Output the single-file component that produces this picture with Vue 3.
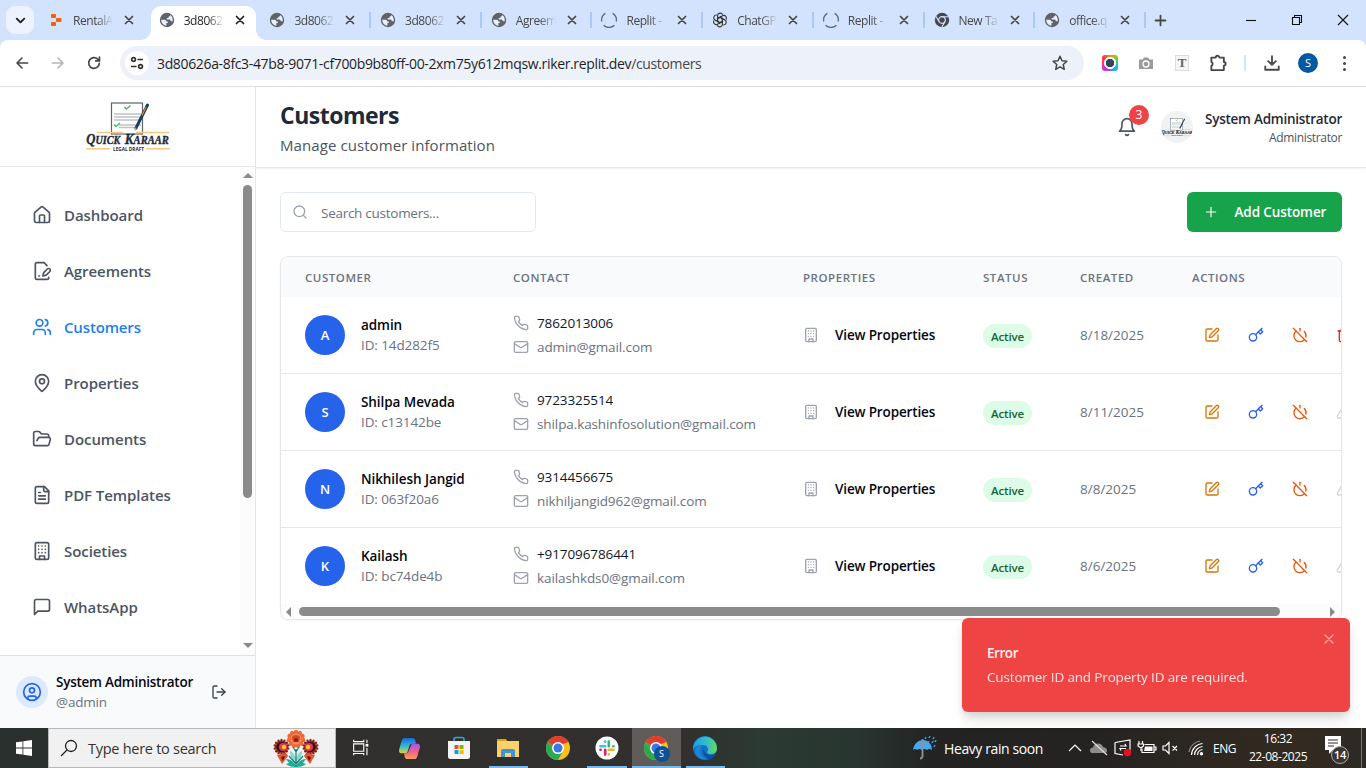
<script setup>
import { h } from 'vue'

const glyphs = {
  home: '<path d="M15 21v-8a1 1 0 0 0-1-1h-4a1 1 0 0 0-1 1v8"/><path d="M3 10a2 2 0 0 1 .709-1.528l7-5.999a2 2 0 0 1 2.582 0l7 5.999A2 2 0 0 1 21 10v9a2 2 0 0 1-2 2H5a2 2 0 0 1-2-2z"/>',
  sign: '<path d="M20 19.5v.5a2 2 0 0 1-2 2H6a2 2 0 0 1-2-2V4a2 2 0 0 1 2-2h8.5L18 5.5"/><path d="M8 18h1"/><path d="M18.42 9.61a2.1 2.1 0 1 1 2.97 2.97L16.95 17 13 18l.99-3.95 4.43-4.44Z"/>',
  users: '<path d="M16 21v-2a4 4 0 0 0-4-4H6a4 4 0 0 0-4 4v2"/><circle cx="9" cy="7" r="4"/><path d="M22 21v-2a4 4 0 0 0-3-3.87"/><path d="M16 3.13a4 4 0 0 1 0 7.75"/>',
  pin: '<path d="M20 10c0 4.993-5.539 10.193-7.399 11.799a1 1 0 0 1-1.202 0C9.539 20.193 4 14.993 4 10a8 8 0 0 1 16 0"/><circle cx="12" cy="10" r="3"/>',
  folder: '<path d="m6 14 1.5-2.9A2 2 0 0 1 9.24 10H20a2 2 0 0 1 1.94 2.5l-1.54 6a2 2 0 0 1-1.95 1.5H4a2 2 0 0 1-2-2V5a2 2 0 0 1 2-2h3.9a2 2 0 0 1 1.69.9l.81 1.2a2 2 0 0 0 1.67.9H18a2 2 0 0 1 2 2v2"/>',
  file: '<path d="M15 2H6a2 2 0 0 0-2 2v16a2 2 0 0 0 2 2h12a2 2 0 0 0 2-2V7Z"/><path d="M14 2v4a2 2 0 0 0 2 2h4"/><path d="M10 9H8"/><path d="M16 13H8"/><path d="M16 17H8"/>',
  building: '<rect width="16" height="20" x="4" y="2" rx="2"/><path d="M9 22v-4h6v4"/><path d="M8 6h.01M16 6h.01M12 6h.01M12 10h.01M12 14h.01M16 10h.01M16 14h.01M8 10h.01M8 14h.01"/>',
  message: '<path d="M21 15a2 2 0 0 1-2 2H7l-4 4V5a2 2 0 0 1 2-2h14a2 2 0 0 1 2 2z"/>',
  user: '<circle cx="12" cy="12" r="10"/><circle cx="12" cy="10" r="3"/><path d="M7 20.662V19a2 2 0 0 1 2-2h6a2 2 0 0 1 2 2v1.662"/>',
  logout: '<path d="M9 21H5a2 2 0 0 1-2-2V5a2 2 0 0 1 2-2h4"/><path d="m16 17 5-5-5-5"/><path d="M21 12H9"/>',
  bell: '<path d="M6 8a6 6 0 0 1 12 0c0 7 3 9 3 9H3s3-2 3-9"/><path d="M10.3 21a1.94 1.94 0 0 0 3.4 0"/>',
  search: '<circle cx="11" cy="11" r="8"/><path d="m21 21-4.3-4.3"/>',
  plus: '<path d="M5 12h14M12 5v14"/>',
  close: '<path d="M18 6 6 18M6 6l12 12"/>',
  phone: '<path d="M22 16.92v3a2 2 0 0 1-2.18 2 19.79 19.79 0 0 1-8.63-3.07 19.5 19.5 0 0 1-6-6 19.79 19.79 0 0 1-3.07-8.67A2 2 0 0 1 4.11 2h3a2 2 0 0 1 2 1.72 12.84 12.84 0 0 0 .7 2.81 2 2 0 0 1-.45 2.11L8.09 9.91a16 16 0 0 0 6 6l1.27-1.27a2 2 0 0 1 2.11-.45 12.84 12.84 0 0 0 2.81.7A2 2 0 0 1 22 16.92z"/>',
  mail: '<rect width="20" height="16" x="2" y="4" rx="2"/><path d="m22 7-8.97 5.7a1.94 1.94 0 0 1-2.06 0L2 7"/>',
  edit: '<path d="M12 3H5a2 2 0 0 0-2 2v14a2 2 0 0 0 2 2h14a2 2 0 0 0 2-2v-7"/><path d="M18.375 2.625a1 1 0 0 1 3 3l-9.013 9.014a2 2 0 0 1-.853.505l-2.873.84a.5.5 0 0 1-.62-.62l.84-2.873a2 2 0 0 1 .506-.852z"/>',
  key: '<circle cx="7.5" cy="15.5" r="5.5"/><path d="m21 2-9.6 9.6"/><path d="m15.5 7.5 3 3L22 7l-3-3"/>',
  power: '<path d="M18.36 6.64A9 9 0 0 1 20.77 15"/><path d="M6.16 6.16a9 9 0 1 0 12.68 12.68"/><path d="M12 2v4"/><path d="m2 2 20 20"/>',
  trash: '<path d="M3 6h18"/><path d="M19 6v14a2 2 0 0 1-2 2H7a2 2 0 0 1-2-2V6"/><path d="M8 6V4a2 2 0 0 1 2-2h4a2 2 0 0 1 2 2v2"/><path d="M10 11v6M14 11v6"/>',
  alert: '<path d="m21.73 18-8-14a2 2 0 0 0-3.48 0l-8 14A2 2 0 0 0 4 21h16a2 2 0 0 0 1.73-3"/><path d="M12 9v4M12 17h.01"/>',
  back: '<path d="M20.500 12H4.500M12 4.500 4.500 12l7.500 7.500"/>',
  forward: '<path d="M3.500 12h16M12 4.500l7.500 7.500-7.500 7.500"/>',
  reload: '<path d="M20 12.500a8 8 0 1 1-2.400-6.200L20 8.600"/><path d="M20.200 3.200v5.700h-5.700"/>',
  star: '<path d="m12 3 2.700 6 6.500.7-4.900 4.300 1.400 6.500-5.700-3.400-5.700 3.400 1.400-6.500-4.900-4.300 6.500-.7z"/>',
  puzzle: '<path d="M4 5.500h5.300a2.200 2.200 0 0 1 4.400 0h5.300v5.300a2.200 2.200 0 0 1 0 4.400v5.300H4v-5.100a2.600 2.600 0 0 0 0-4.800z"/>',
  download: '<path d="M12 3v11M7 9.500l5 5 5-5M3 16.500v4.500h18v-4.500"/>',
  chevron: '<path d="m6 9 6 6 6-6"/>',
}

const Icon = (p) =>
  h('svg', {
    viewBox: '0 0 24 24', width: p.size, height: p.size, fill: 'none', stroke: 'currentColor',
    'stroke-width': p.stroke || 2, 'stroke-linecap': 'round', 'stroke-linejoin': 'round',
    innerHTML: glyphs[p.name],
  })
Icon.props = ['name', 'size', 'stroke']

const globe = '<circle cx="8" cy="8" r="7.200" fill="#5f6368"/><path fill="#e6effe" d="M2.200 7.800h3.600q1.500.2 1.600 1.600h1.400v1.700H7.400v2.600C4.300 13.500 2.200 11 2.200 7.800zM8.300 2.300c1.200 0 2 .3 2.900.8-.1 1-.7 1.600-1.800 1.700v1.300H7.700v1.500h2.900q1.100.3 1.200 1.700h1.900C14.300 5.500 12 2.300 8.300 2.300z"/>'
const spinner = '<g fill="none" stroke="#4a7186" stroke-width="1.300"><path d="M4.500 1.400A7.500 7.500 0 0 0 .8 9.500M11.500 1.400a7.500 7.500 0 0 1 3.700 8.100M2.600 13.200a7.500 7.500 0 0 0 10.800 0"/></g>'
const knot = '<g fill="none" stroke="#333" stroke-width="1.100">' +
  [0, 60, 120, 180, 240, 300].map((a) => `<path transform="rotate(${a} 8 8)" d="M5.600 8V3.700a2.600 2.600 0 0 1 5-1M5.600 6.600 8 5.200l3.800 2.200"/>`).join('') + '</g>'
const favicons = {
  replit: '<g fill="#f26207"><rect x="3" y="2" width="5" height="4" rx=".8"/><rect x="8" y="6" width="5.500" height="4" rx=".8"/><rect x="3" y="10" width="5" height="4" rx=".8"/></g>',
  globe, spinner, knot,
  chrome: '<circle cx="8" cy="8" r="7.200" fill="#45484c"/><circle cx="8" cy="8" r="3.300" fill="none" stroke="#d3e3fd" stroke-width="1.200"/><path d="M8 4.700h6.500M5.100 9.700 1.900 4.200M10.900 9.700 7.700 15.200" stroke="#d3e3fd" stroke-width="1.100"/>',
}
const tabs = [
  { icon: 'replit', title: 'RentalA', sep: false },
  { icon: 'globe', title: '3d8062', active: true, sep: false },
  { icon: 'globe', title: '3d8062', sep: true },
  { icon: 'globe', title: '3d8062', sep: true },
  { icon: 'globe', title: 'Agreem', sep: true },
  { icon: 'spinner', title: 'Replit -', sep: true },
  { icon: 'knot', title: 'ChatGP', sep: true },
  { icon: 'spinner', title: 'Replit -', sep: true },
  { icon: 'chrome', title: 'New Ta', sep: true },
  { icon: 'globe', title: 'office.q', sep: true },
]

const nav = [
  { icon: 'home', label: 'Dashboard' },
  { icon: 'sign', label: 'Agreements' },
  { icon: 'users', label: 'Customers', active: true },
  { icon: 'pin', label: 'Properties' },
  { icon: 'folder', label: 'Documents' },
  { icon: 'file', label: 'PDF Templates' },
  { icon: 'building', label: 'Societies' },
  { icon: 'message', label: 'WhatsApp' },
]

const columns = ['Customer', 'Contact', 'Properties', 'Status', 'Created', 'Actions']
const customers = [
  { name: 'admin', id: '14d282f5', phone: '7862013006', email: 'admin@gmail.com', created: '8/18/2025', last: 'trash' },
  { name: 'Shilpa Mevada', id: 'c13142be', phone: '9723325514', email: 'shilpa.kashinfosolution@gmail.com', created: '8/11/2025', last: 'alert' },
  { name: 'Nikhilesh Jangid', id: '063f20a6', phone: '9314456675', email: 'nikhiljangid962@gmail.com', created: '8/8/2025', last: 'alert' },
  { name: 'Kailash', id: 'bc74de4b', phone: '+917096786441', email: 'kailashkds0@gmail.com', created: '8/6/2025', last: 'alert' },
]

const logoArt =
  '<rect x="25.500" y="1" width="31" height="31" fill="#fff" stroke="#5b6470" stroke-width="1.200"/>' +
  '<path d="M28 12h27M28 15h27M28 18h27M33 23h22M33 25.500h18" stroke="#bfc3c8" stroke-width="1.500"/>' +
  '<path d="m38.500 5 2 2 4-3.500M28 22.500l2 2 4-3.500" fill="none" stroke="#4dbb5f" stroke-width="1.500"/>' +
  '<path d="m61.500 3-11.500 23" stroke="#1d3a5c" stroke-width="3" stroke-linecap="round"/><path d="m60 5-4 8.500M50 25.500 48.800 28.500" stroke="#d99b3c" stroke-width="1.100"/>' +
  '<path d="M11 30.500h26M50 30.500h33M0 46.800h24M60 46.800h24" stroke="#f9c780" stroke-width="1.400"/>' +
  '<g font-family="Liberation Serif, serif" font-weight="bold" font-style="italic" fill="#1f2a37" stroke="#1f2a37" stroke-width=".4"><text x=".3" y="42" font-size="15" textLength="34" lengthAdjust="spacingAndGlyphs">Q<tspan font-size="12">UICK</tspan></text><text x="38.800" y="42" font-size="15" textLength="44" lengthAdjust="spacingAndGlyphs">K<tspan font-size="12">ARAAR</tspan></text></g>' +
  '<text x="27" y="48.600" font-size="5" font-family="Open Sans, sans-serif" font-weight="bold" fill="#1f2a37" textLength="31" lengthAdjust="spacingAndGlyphs">LEGAL DRAFT</text>'

const chromeBall =
  '<circle cx="12" cy="12" r="12" fill="#fbc116"/><path d="M1.600 6A12 12 0 0 1 22.400 6H12a6 6 0 0 0-5.200 3z" fill="#e33b2e"/><path d="M1.600 6A12 12 0 0 0 12 24l5.200-9A6 6 0 0 1 6.800 15z" fill="#2da94f"/><path d="M1.600 6 6.800 15 12 12z" fill="#2da94f"/><path d="M1.600 6h20.800L12 10z" fill="#e33b2e"/><circle cx="12" cy="12" r="6" fill="#fff"/><circle cx="12" cy="12" r="4.500" fill="#3b78e7"/>'
const apps = [
  { name: 'task', art: '<g fill="none" stroke="#fff" stroke-width="1.200"><path d="M4 7.500h11v8H4zM4 3v2h11V3M4 20v-2h11v2M18.500 3v3.500M18.500 12v8"/></g><path d="M17 7.500h3v3h-3z" fill="#fff"/>' },
  { name: 'copilot', art: '<defs><linearGradient id="cp1" x1="0" y1="0" x2="0" y2="1"><stop stop-color="#1b67d8"/><stop offset=".5" stop-color="#29b6d9"/><stop offset="1" stop-color="#d8d43a"/></linearGradient><linearGradient id="cp2" x1="0" y1="0" x2="0" y2="1"><stop stop-color="#a259e6"/><stop offset=".5" stop-color="#ef5c96"/><stop offset="1" stop-color="#f8a14f"/></linearGradient></defs><path d="M7 1h8c2 0 2.500 1 3 2.500l.7 3.500H15c-2 0-2.700 1-3.200 2.700L10 15c-.5 1.500-1.200 2-3 2H4c-3 0-3.300-2-2.700-4.500L4 3.500C4.500 2 5.300 1 7 1z" fill="url(#cp1)"/><path d="M17 23H10c-2 0-2.500-1-3-2.500L6.300 17H8c2 0 2.700-1 3.200-2.700L13.500 9c.5-1.500 1.200-2 3-2H20c3 0 3.300 2 2.700 4.500L20 20.500c-.5 1.500-1.300 2.500-3 2.500z" fill="url(#cp2)"/>' },
  { name: 'store', art: '<path d="M7 5V3.500Q7 1.500 9 1.500h6q2 0 2 2V5" fill="none" stroke="#29a9df" stroke-width="1.600"/><path d="M1 5h22v15.500q0 2.500-2.500 2.500h-17Q1 23 1 20.500z" fill="#f4f4f4"/><path d="M7.500 9h4v4h-4z" fill="#f25022"/><path d="M12.500 9h4v4h-4z" fill="#7fba00"/><path d="M7.500 14h4v4h-4z" fill="#00a4ef"/><path d="M12.500 14h4v4h-4z" fill="#ffb900"/>' },
  { name: 'files', open: true, art: '<path d="M1 3h9l2 3h-11z" fill="#e0a10d"/><path d="M1 5h22v16H1z" fill="#fcd267"/><path d="M5 21v-6q0-2 2-2h10q2 0 2 2v6h-4v-4H9v4z" fill="#3e93d9"/>' },
  { name: 'chrome', art: chromeBall },
  { name: 'slack', open: true, art: '<circle cx="12" cy="12" r="11.500" fill="#fff"/><g stroke-width="2.600" stroke-linecap="round"><path d="M10.200 5.500v.2M5.500 10.200h4.700" stroke="#36c5f0"/><path d="M13.800 5.500v4.700M18.500 10.200h-.2" stroke="#2eb67d"/><path d="M13.800 13.800h4.700M13.800 18.500v-.2" stroke="#ecb22e"/><path d="M10.200 13.800v4.700M5.500 13.800h.2" stroke="#e01e5a"/></g>' },
  { name: 'chromeS', open: true, active: true, art: chromeBall },
  { name: 'edge', open: true, art: '<defs><linearGradient id="ed1" x1="0" x2="1"><stop stop-color="#1b9de2"/><stop offset=".6" stop-color="#35c1c9"/><stop offset="1" stop-color="#6fd84a"/></linearGradient></defs><circle cx="12" cy="12" r="12" fill="#1570c4"/><path d="M.2 10.500A12 12 0 0 1 24 12c0 4-3 6-6 6-3.500 0-4.500-1.800-3.500-3 1.500-2 0-6-4.500-6C5 9 1.500 10 .2 14z" fill="url(#ed1)"/><path d="M10 9.500c-4 2-4 10 3.500 13.500-3 1-9-.5-11-6S5.500 9 10 9.500z" fill="#1a86d8"/><path d="M11.500 11.500c-1.500 2.500 0 7.500 6 7.500 2 0 3.500-.5 5-1.500-1.500 3-3 4.500-5 5.500-6 0-9.500-7-6-11.500z" fill="#0d4f9c"/>' },
]

const petals = (n, r, w, len, fill) =>
  Array.from({ length: n }, (_, i) => `<ellipse cx="0" cy="${-r}" rx="${w}" ry="${len}" fill="${fill}" transform="rotate(${(i * 360) / n})"/>`).join('')
const flowers =
  '<g transform="translate(23 10)">' + petals(11, 6.5, 2.2, 2.8, '#ee6a35') + '<circle r="5.500" fill="#f58a5b"/><path d="M-4-1a4 3 0 0 1 8 0l-1 4h-6z" fill="#d9452a"/><circle r="2" cy="1" fill="#7a2014"/></g>' +
  '<g transform="translate(8.500 18)">' + petals(14, 5.8, 1.3, 2.4, '#8c1d18') + '<circle r="5" fill="#2d1715"/><circle cx="1.500" r="4" fill="#e8344e"/><circle cx="2.500" r="2.300" fill="#f8c83c"/></g>' +
  '<g transform="translate(37.500 18)">' + petals(14, 5.8, 1.3, 2.4, '#8c1d18') + '<circle r="5" fill="#2d1715"/><circle cx="-1.500" r="4" fill="#e8344e"/><circle cx="-2.500" r="2.300" fill="#f8c83c"/></g>' +
  '<path d="m4 26 9-2 2 3-6 8zM42 26l-9-2-2 3 6 8z" fill="#e2552c"/><path d="m8 28 4-1-2 5zM38 28l-4-1 2 5z" fill="#531a17"/>' +
  '<path d="M23 38q-7 0-10-3l3-1-3-4q5 0 8 4l2 2 2-2q3-4 8-4l-3 4 3 1q-3 3-10 3z" fill="#25a99a"/><path d="M23 36c-5-6-6-10-6-14 3 1 5 4 6 7 1-3 3-6 6-7 0 4-1 8-6 14z" fill="#8fd6d2"/><path d="m20 18 3 5 3-5M23 20v18M16 27l7 8 7-8" fill="none" stroke="#178477" stroke-width="1.200"/>'
</script>

<template>
  <div class="screen">
    <div class="tabstrip">
      <div class="tabsearch"><Icon name="chevron" size="15" stroke="3" /></div>
      <div v-for="(t, i) in tabs" :key="i" class="tab" :class="{ active: t.active, sep: t.sep }">
        <svg class="favicon" viewBox="0 0 16 16" v-html="favicons[t.icon]"></svg>
        <span class="title">{{ t.title }}</span>
        <Icon name="close" size="14" stroke="3" />
      </div>
      <Icon class="newtab" name="plus" size="17" stroke="2.500" />
      <div class="winctl">
        <svg viewBox="0 0 12 12"><path d="M1 6.500h10" /></svg>
        <svg viewBox="0 0 12 12"><path d="M1.500 3.500h7v7h-7zM3.500 3.500v-2h7v7h-2" /></svg>
        <svg viewBox="0 0 12 12"><path d="m1 1 10 10M11 1 1 11" /></svg>
      </div>
    </div>
    <div class="toolbar-back">
      <div class="toolbar">
        <div class="tool"><Icon name="back" size="16" stroke="2.400" /></div>
        <div class="tool dim"><Icon name="forward" size="16" stroke="2.400" /></div>
        <div class="tool"><Icon name="reload" size="16" stroke="2.600" /></div>
        <div class="omnibox">
          <span class="siteinfo">
            <svg viewBox="0 0 16 16"><g fill="none" stroke="#333" stroke-width="1.700"><circle cx="4.500" cy="4.500" r="1.900" /><path d="M8.500 4.500H14M2 11.500h5.500" /><circle cx="11.500" cy="11.500" r="1.900" /></g></svg>
          </span>
          <span class="url">3d80626a-8fc3-47b8-9071-cf700b9b80ff-00-2xm75y612mqsw.riker.replit.dev<i>/customers</i></span>
          <Icon class="star" name="star" size="18" stroke="2" />
        </div>
        <div class="tool">
          <span class="lens"></span>
        </div>
        <div class="tool">
          <svg width="16" height="16" viewBox="0 0 16 16"><path d="M1 4.500h3.500L6 2.500h4l1.500 2H15V14H1z" fill="#9b9b9b" /><circle cx="8" cy="9" r="3" fill="#9b9b9b" stroke="#fff" stroke-width="1.300" /></svg>
        </div>
        <div class="tool"><span class="tee">T</span></div>
        <div class="tool"><Icon name="puzzle" size="20" stroke="2.200" /></div>
        <div class="divider"></div>
        <div class="tool"><Icon name="download" size="18" stroke="2.400" /></div>
        <div class="tool"><span class="profile">S</span></div>
        <div class="tool"><span class="dots"><b></b><b></b><b></b></span></div>
      </div>
    </div>

    <div class="app">
      <aside class="sidebar">
        <div class="brand"><svg class="logo" viewBox="0 0 84 50" v-html="logoArt"></svg></div>
        <div class="navwrap">
          <nav>
            <a v-for="n in nav" :key="n.label" :class="{ active: n.active }"><Icon :name="n.icon" size="20" /><span>{{ n.label }}</span></a>
          </nav>
          <div class="vscroll"><i class="up"></i><div class="thumb"></div><i class="down"></i></div>
        </div>
        <div class="account">
          <span class="face"><Icon name="user" size="20" /></span>
          <div class="who"><strong>System Administrator</strong><span>@admin</span></div>
          <Icon class="exit" name="logout" size="16" />
        </div>
      </aside>

      <main>
        <header>
          <div class="heading"><h1>Customers</h1><p>Manage customer information</p></div>
          <div class="notify"><Icon name="bell" size="20" /><span class="count">3</span></div>
          <div class="portrait"><svg viewBox="0 0 84 50" v-html="logoArt"></svg></div>
          <div class="me"><strong>System Administrator</strong><span>Administrator</span></div>
        </header>
        <section class="content">
          <div class="actionsbar">
            <div class="searchbox"><Icon name="search" size="16" /><span>Search customers...</span></div>
            <button class="add"><Icon name="plus" size="16" stroke="1.700" /><span>Add Customer</span></button>
          </div>
          <div class="card">
            <div class="row head"><span v-for="c in columns" :key="c">{{ c }}</span></div>
            <div v-for="c in customers" :key="c.id" class="row">
              <div class="person">
                <span class="avatar">{{ c.name[0].toUpperCase() }}</span>
                <div><strong>{{ c.name }}</strong><span>ID: {{ c.id }}</span></div>
              </div>
              <div class="contact">
                <div><Icon name="phone" size="16" /><span class="tel">{{ c.phone }}</span></div>
                <div><Icon name="mail" size="16" /><span class="mail">{{ c.email }}</span></div>
              </div>
              <div class="props"><Icon name="building" size="16" /><span>View Properties</span></div>
              <div class="status"><span>Active</span></div>
              <div class="created">{{ c.created }}</div>
              <div class="ops">
                <Icon class="amber" name="edit" size="16" />
                <Icon class="blue" name="key" size="16" />
                <Icon class="orange" name="power" size="16" />
                <Icon :class="c.last" :name="c.last" size="16" />
              </div>
            </div>
            <div class="hscroll"><i class="left"></i><div class="thumb"></div><i class="right"></i></div>
          </div>
        </section>
      </main>
    </div>

    <div class="toast">
      <strong>Error</strong>
      <p>Customer ID and Property ID are required.</p>
      <Icon class="dismiss" name="close" size="16" />
    </div>

    <footer class="taskbar">
      <div class="start"><svg viewBox="0 0 16 16"><path d="M0 2.300 6.500 1.400v6.200H0zM7.300 1.300 16 0v7.600H7.300zM0 8.400h6.500v6.200L0 13.700zM7.300 8.400H16V16l-8.700-1.300z" fill="#fff" /></svg></div>
      <div class="find">
        <svg class="mag" viewBox="0 0 18 18"><circle cx="11" cy="7" r="5.500" /><path d="m7 11-6 6" /></svg>
        <span>Type here to search</span>
        <svg class="flowers" viewBox="0 0 46 38" v-html="flowers"></svg>
      </div>
      <div class="apps">
        <div v-for="a in apps" :key="a.name" class="app-icon" :class="[a.name, { open: a.open, current: a.active }]">
          <svg viewBox="0 0 24 24" v-html="a.art"></svg>
          <span v-if="a.active" class="mini">S</span>
        </div>
      </div>
      <div class="tray">
        <svg class="umbrella" viewBox="0 0 28 26"><path d="M2 15C3 8 8 5 12 5s9 3 9 10q-3-2-5 0-3-2-5 0-3-2-5 0-2-2-4 0z" fill="#4aa6ea" /><path d="M11.500 4v17q0 2.500-2.500 2.500" fill="none" stroke="#8d9297" stroke-width="1.800" /><path d="m15 2-1 2M19 1l-1 2M23 2l-1 2M18 6l-1 2M22 6l-1 2M25 5l-1 2M24 10l-1 2" stroke="#3f9be8" stroke-width="1.500" /></svg>
        <span class="weather">Heavy rain soon</span>
        <svg class="w26" viewBox="0 0 26 20"><path d="m7 13 6-6 6 6" /></svg>
        <svg class="w22" viewBox="0 0 22 20"><path d="M4 15q-2 0-2-3 0-2 3-2.500 1-4 5-4 4 0 5 3.500 4 .5 4 3.500 0 2.500-3 2.500z" fill="#8d8d8d" stroke="none" /><path d="M4 3l15 14" stroke="#ddd" /></svg>
        <svg class="w26" viewBox="0 0 26 20"><path d="M5 4.500 20 2v10M5 4.500V15.500l8 1.500M10 8h6l-1-2M16 10.500h-6l1 2" /><circle cx="17.500" cy="14.500" r="3.800" fill="#e81123" stroke="none" /></svg>
        <svg class="w22" viewBox="0 0 22 20"><path d="M8.500 6.500H18v8H6v-4M18.500 9h1.500v3h-1.500" /><path d="M9 8.500h7.500V13H8z" fill="#fff" stroke="none" /><path d="M3 3v3M6.500 3v3M2 6h5.500v2L5 10 2 8zM5 10v3" /></svg>
        <svg class="w26" viewBox="0 0 26 20"><path d="M5 8h2.500L11 4.500v11L7.500 12H5zM14.500 8l4.500 4.500M19 8l-4.500 4.500" /></svg>
        <svg class="w26 wifi" viewBox="0 0 26 20"><path d="M7.500 17A12 12 0 0 1 18.500 5.500M10.500 17a9 9 0 0 1 8-8.500M13.500 17a6 6 0 0 1 5-5.500" /><path d="M5 14A14 14 0 0 1 16 3" stroke="#888" /><circle cx="17.500" cy="15.800" r="1.700" fill="#fff" stroke="none" /></svg>
        <span class="lang">ENG</span>
        <div class="clock"><span class="time">16:32</span><span class="date">22-08-2025</span></div>
        <div class="alerts"><svg viewBox="0 0 36 32"><path d="M8 4h16v14H16l-4 4v-4H8z" fill="#fff" /><path d="M11 8h10M11 11h10M11 14h6" stroke="#2a2826" /></svg><span>14</span></div>
        <div class="edge-line"></div>
      </div>
    </footer>
  </div>
</template>

<style>
html, body { margin: 0; overflow: hidden; }
</style>

<style scoped>
* { box-sizing: border-box; }
.screen { position: relative; width: 1366px; height: 768px; overflow: hidden; display: flex; flex-direction: column; background: #fff; font-family: "Open Sans", "Noto Sans", sans-serif; color: #030712; }
svg { display: block; flex: none; }
strong { font-weight: 600; }
span, strong, p, h1 { white-space: nowrap; }

.tabstrip { height: 40px; background: #d3e3fd; display: flex; flex: none; }
.tabsearch { width: 28px; height: 28px; margin: 6px 4px 0 6px; border-radius: 9px; background: #edf3fe; display: flex; align-items: center; justify-content: center; color: #1f1f1f; flex: none; }
.tab { position: relative; width: 110.7px; flex: none; padding-left: 10px; display: flex; align-items: center; color: #474747; height: 40px; }
.tab > * { position: relative; }
.favicon { width: 16px; height: 16px; }
.title { width: 42px; margin: 0 7px 0 9px; font-size: 12px; letter-spacing: -0.45px; line-height: 20px; padding-top: 1px; -webkit-mask-image: linear-gradient(90deg, #000 55%, transparent 96%); mask-image: linear-gradient(90deg, #000 55%, transparent 96%); }
.tab.sep::after { content: ""; position: absolute; right: -1px; top: 12px; width: 2px; height: 16px; background: #a8c7fa; }
.tab.active { color: #1f1f1f; }
.tab.active::before { content: ""; position: absolute; left: 2px; right: 3px; top: 6px; bottom: 0; border-radius: 10px 10px 0 0; background: #fff; }
.tab.active::after { content: ""; position: absolute; left: -8px; right: -7px; bottom: 0; height: 10px; background: radial-gradient(circle at 0 0, transparent 9.500px, #fff 10px) 0 0 / 10px 10px no-repeat, radial-gradient(circle at 100% 0, transparent 9.500px, #fff 10px) 100% 0 / 10px 10px no-repeat; }
.newtab { align-self: center; margin-left: 7px; color: #474747; }
.winctl { margin-left: auto; display: flex; align-items: center; gap: 34px; padding-right: 17px; }
.winctl svg { width: 12px; height: 12px; fill: none; stroke: #111; stroke-width: 1.1; }

.toolbar-back { height: 47px; background: #d3e3fd; flex: none; }
.toolbar { height: 47px; background: #fff; border-radius: 8px 8px 0 0; border-bottom: 1px solid #dedfe1; display: flex; align-items: center; padding: 0 4px; }
.tool { width: 36px; height: 36px; display: flex; align-items: center; justify-content: center; color: #474747; flex: none; }
.dim { color: #b4b4b4; }
.omnibox { width: 964px; height: 34px; margin: 0 8px; border-radius: 17px; background: #edf1fa; display: flex; align-items: center; flex: none; }
.siteinfo { width: 24px; height: 24px; margin: 0 8px 0 5px; border-radius: 50%; background: #fff; display: flex; align-items: center; justify-content: center; }
.siteinfo svg { width: 16px; height: 16px; }
.url { font-size: 14px; letter-spacing: -0.35px; color: #1f1f1f; }
.url i { font-style: normal; color: #474747; }
.star { margin: 0 15px 0 auto; color: #474747; }
.lens { width: 16px; height: 16px; border-radius: 3px; background: radial-gradient(circle, #34445a 4px, #fff 4.500px 5.800px, transparent 6.300px), conic-gradient(#ff8a1e, #7ed321, #17c6d9, #2aa4ff, #b935f0, #ff2f8e, #ff3b3b, #ff8a1e); }
.tee { width: 14px; height: 16px; border: 1px solid #ddd; background: #f5f5f5; font: bold 13px/14px "Liberation Serif", serif; color: #666; text-align: center; }
.divider { width: 2px; height: 16px; margin: 0 8px; background: #d3e3fd; flex: none; }
.profile { width: 20px; height: 20px; border-radius: 50%; background: #0159a0; color: #fff; font-size: 11px; line-height: 20px; text-align: center; }
.dots { display: flex; flex-direction: column; gap: 3px; }
.dots b { width: 3px; height: 3px; border-radius: 50%; background: #474747; }

.app { display: flex; height: 641px; flex: none; }
.sidebar { width: 256px; border-right: 1px solid #e5e7eb; display: flex; flex-direction: column; flex: none; }
.brand { height: 80px; border-bottom: 1px solid #e5e7eb; display: flex; justify-content: center; padding-top: 15px; flex: none; }
.logo { width: 84px; height: 50px; }
.navwrap { display: flex; flex: 1; }
nav { flex: 1; display: flex; flex-direction: column; gap: 8px; padding: 24px 16px 0; }
nav a { height: 48px; padding: 0 16px; display: flex; align-items: center; gap: 12px; font-size: 15px; font-weight: 600; color: #4b5563; letter-spacing: -0.07px; }
nav a.active { color: #1d80ea; letter-spacing: -0.15px; }
.vscroll { width: 15px; padding: 6px 0 7px; background: #fcfcfc; display: flex; flex-direction: column; align-items: center; }
.vscroll .thumb { width: 9px; height: 313px; margin: 7px 0 auto; border-radius: 5px; background: #8b8b8b; }
.up, .down { border: 5px solid transparent; width: 0; }
.up { border-top: 0; border-bottom: 5px solid #8b8b8b; }
.down { border-bottom: 0; border-top: 5px solid #8b8b8b; }
.account { height: 73px; border-top: 1px solid #dbe2ec; background: #f9fafb; padding: 0 16px; display: flex; align-items: center; flex: none; }
.face { width: 32px; height: 32px; border-radius: 50%; background: #dbeafe; color: #2563eb; display: flex; align-items: center; justify-content: center; }
.who { margin-left: 8px; width: 155px; display: flex; flex-direction: column; font-size: 13.500px; line-height: 20px; letter-spacing: -0.2px; }
.who strong { letter-spacing: -0.25px; }
.who span { color: #6b7280; }
.exit { color: #374151; }

main { flex: 1; display: flex; flex-direction: column; min-width: 0; }
header { height: 81px; border-bottom: 1px solid #e5e7eb; box-shadow: 0 1px 2px rgba(0,0,0,.06); padding: 0 24px; display: flex; align-items: center; flex: none; }
h1 { margin: 0; font-size: 23px; line-height: 32px; font-weight: 700; color: #1f2937; letter-spacing: -0.5px; }
.heading { align-self: flex-start; padding-top: 12px; }
.heading p { margin: 2px 0 0; font-size: 15px; line-height: 24px; color: #4b5563; letter-spacing: .08px; }
.notify { position: relative; margin-left: auto; margin-right: 24px; color: #4b5563; }
.count { position: absolute; left: 12px; top: -12px; width: 20px; height: 20px; border-radius: 50%; background: #ef4444; color: #fff; font-size: 12px; line-height: 20px; text-align: center; }
.portrait { width: 32px; height: 32px; border-radius: 50%; background: #f1f2f4; overflow: hidden; display: flex; align-items: center; }
.portrait svg { width: 32px; height: 19px; }
.me { width: 137px; margin-left: 12px; padding-top: 2px; display: flex; flex-direction: column; align-items: flex-end; }
.me strong { font-size: 13.500px; line-height: 20px; color: #1f2937; letter-spacing: -0.25px; }
.me span { font-size: 12px; line-height: 18px; color: #4b5563; letter-spacing: -0.35px; }

.content { padding: 24px; }
.actionsbar { height: 40px; display: flex; justify-content: space-between; }
.searchbox { width: 256px; border: 1px solid #e2e8f0; border-radius: 6px; display: flex; align-items: center; padding-left: 11px; gap: 13px; color: #9ca3af; }
.searchbox span { color: #6b7280; font-size: 13.500px; letter-spacing: -0.27px; padding-top: 2px; }
.add { width: 155px; border: 0; border-radius: 6px; background: #16a34a; color: #fff; display: flex; align-items: center; padding: 0 16px; gap: 15.500px; font: 600 13.500px "Open Sans", sans-serif; letter-spacing: -0.1px; }
.card { margin-top: 24px; width: 1062px; height: 364px; border: 1px solid #e5e7eb; border-radius: 8px; overflow: hidden; box-shadow: 0 1px 2px rgba(0,0,0,.05); }
.row { display: grid; grid-template-columns: 208px 290px 180px 97px 112px 190px; padding-left: 24px; height: 77px; align-items: center; border-bottom: 1px solid #e5e7eb; width: 1200px; }
.row:nth-last-child(2) { border-bottom: 0; height: 76px; }
.row.head { height: 40px; background: #f9fafb; border: 0; color: #6b7280; text-transform: uppercase; font-size: 11.500px; font-weight: 600; letter-spacing: .55px; }
.person { display: flex; gap: 16px; align-items: center; }
.avatar { width: 40px; height: 40px; border-radius: 50%; background: #2563eb; color: #fff; font-size: 13px; font-weight: 600; line-height: 40px; text-align: center; }
.person div { display: flex; flex-direction: column; font-size: 13.500px; line-height: 20px; letter-spacing: -0.1px; }
.person strong { letter-spacing: -0.07px; }
.person div span { color: #6b7280; }
.contact { display: flex; flex-direction: column; gap: 4px; font-size: 13.500px; line-height: 20px; }
.contact div { display: flex; gap: 8px; align-items: center; color: #9ca3af; }
.contact .tel { color: #111827; letter-spacing: -0.1px; }
.contact .mail { color: #6b7280; letter-spacing: -0.1px; }
.props { display: flex; align-items: center; gap: 16px; font-size: 13.500px; font-weight: 600; letter-spacing: -0.15px; }
.props svg { color: #9ca3af; }
.status { padding-top: 2px; }
.status span { display: block; width: 49px; height: 24px; border-radius: 12px; background: #dcfce7; color: #166534; font-size: 11.500px; font-weight: 600; line-height: 25px; text-align: center; letter-spacing: -0.1px; }
.created { color: #6b7280; font-size: 13.500px; }
.ops { display: flex; gap: 28px; padding-left: 12px; }
.amber { color: #d97706; }
.blue { color: #2563eb; }
.orange { color: #ea580c; }
.trash { color: #dc2626; }
.alert { color: #d1d5db; }
.hscroll { height: 15px; background: #fcfcfc; display: flex; align-items: center; padding: 0 6px 0 5px; }
.hscroll .thumb { width: 981px; height: 9px; margin: 0 auto 0 8px; border-radius: 5px; background: #8b8b8b; }
.left, .right { border: 5px solid transparent; }
.left { border-left: 0; border-right: 5px solid #8b8b8b; }
.right { border-right: 0; border-left: 5px solid #8b8b8b; }

.toast { position: absolute; left: 962px; top: 618px; width: 388px; height: 94px; padding: 25px; border-radius: 6px; background: #ef4444; color: #fef2f2; font-size: 13.500px; line-height: 20px; box-shadow: 0 10px 15px -3px rgba(0,0,0,.12), 0 4px 8px -2px rgba(0,0,0,.12); }
.toast strong { display: block; letter-spacing: -0.45px; }
.toast p { margin: 4px 0 0; opacity: .9; letter-spacing: -0.16px; }
.dismiss { position: absolute; right: 13px; top: 13px; color: #fca5a5; }

.taskbar { height: 40px; flex: none; display: flex; background: linear-gradient(90deg, #2a302d 0, #312f2d 340px, #322f2d 680px, #2b3a33 760px, #283530 860px, #232323 930px, #252322 1100px, #332b20 1300px, #2c2925 1366px); color: #fff; }
.start { width: 48px; display: flex; align-items: center; justify-content: center; flex: none; }
.start svg { width: 16px; height: 16px; }
.find { width: 288px; border: 1px solid #b8b8b8; background: #f1f1f1; display: flex; align-items: center; padding-left: 11px; color: #333; font-size: 14.500px; letter-spacing: -0.27px; flex: none; }
.mag { width: 18px; height: 18px; fill: none; stroke: #222; stroke-width: 1.3; margin-right: 10px; }
.flowers { width: 46px; height: 38px; margin-left: auto; margin-right: 16px; }
.apps { display: flex; width: 394px; flex: none; }
.app-icon { position: relative; flex: 1; display: flex; align-items: center; justify-content: center; }
.app-icon svg { width: 24px; height: 24px; }
.app-icon.task svg { width: 22px; height: 22px; }
.app-icon.copilot svg { width: 23px; height: 23px; }
.open::after { content: ""; position: absolute; left: 5px; right: 5px; bottom: 0; height: 2px; background: #76b9ed; }
.current { background: #5f5c5a; }
.current::after { left: 0; right: 0; }
.mini { position: absolute; left: 22px; top: 18px; width: 16px; height: 16px; border-radius: 50%; background: #0b5394; font-size: 9px; line-height: 16px; text-align: center; }
.tray { flex: 1; padding-left: 181px; display: flex; align-items: center; font-size: 14px; }
.tray svg { fill: none; stroke: #fff; stroke-width: 1.200; }
.umbrella { width: 28px; height: 26px; margin-right: 5px; }
.tray .umbrella { stroke: none; }
.weather { width: 118px; letter-spacing: -0.4px; }
.w26 { width: 26px; height: 20px; }
.w22 { width: 22px; height: 20px; }
.lang { width: 29px; text-align: center; font-size: 12px; letter-spacing: -0.5px; }
.clock { width: 78px; display: flex; flex-direction: column; align-items: center; font-size: 12px; line-height: 18px; letter-spacing: -0.45px; }
.alerts { position: relative; width: 36px; height: 32px; }
.alerts svg { width: 36px; height: 32px; stroke: none; }
.alerts span { position: absolute; left: 14px; top: 14px; width: 18px; height: 18px; border-radius: 50%; background: #3a3733; border: 1px solid #aaa; font-size: 11px; font-weight: 600; line-height: 16px; text-align: center; letter-spacing: -0.3px; }
.edge-line { width: 1px; height: 40px; margin-left: 8px; background: #77736e; }
</style>
